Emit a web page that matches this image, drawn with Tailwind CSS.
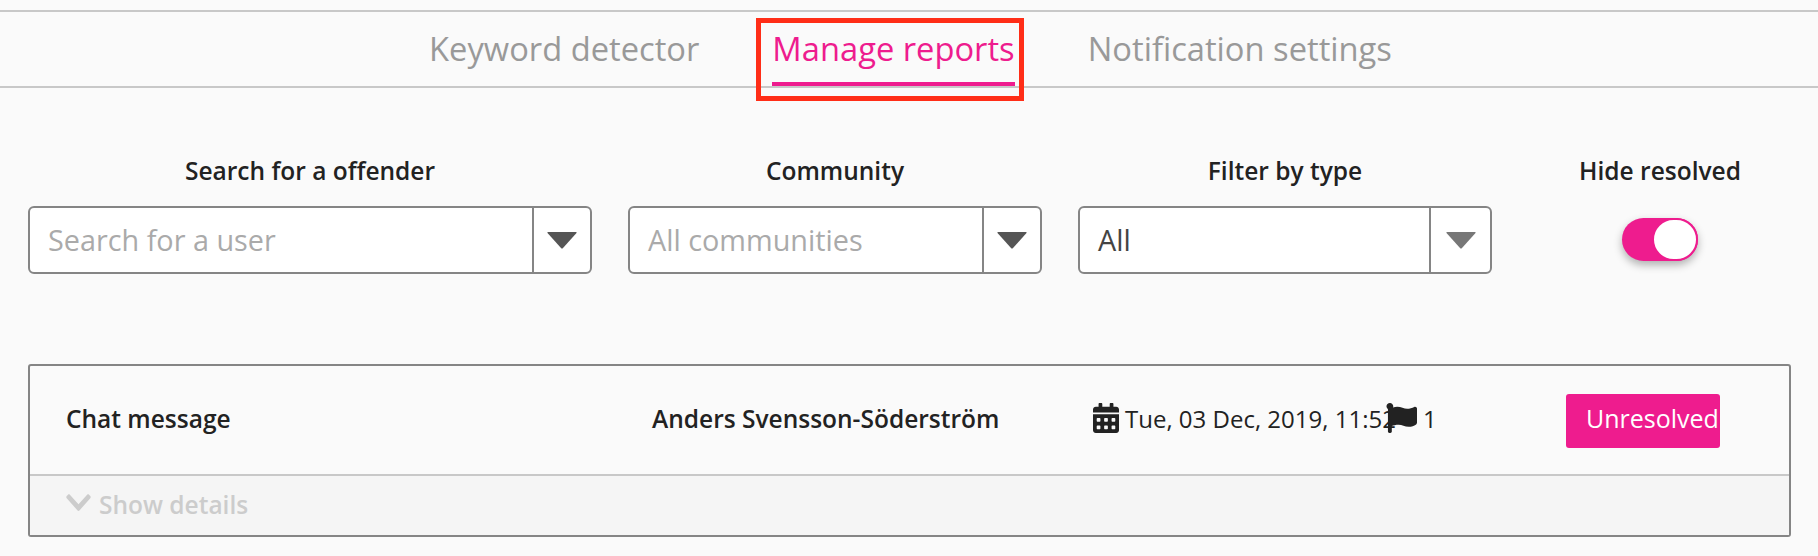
<!DOCTYPE html>
<html lang="en">
<head>
    <meta charset="UTF-8">
    <meta name="viewport" content="width=device-width, initial-scale=1.0">
    <title>Manage reports</title>
    <script src="https://cdn.jsdelivr.net/npm/@tailwindcss/browser@4"></script>
</head>
<body class="bg-[#fafafa] h-[556px] overflow-hidden font-['Open_Sans',sans-serif] text-[#222]">
    <!-- Tabs -->
    <nav class="mt-[10px] h-[78px] border-y-2 border-[#c8c8c8] flex justify-center text-[32.7px] text-[#999] pl-[3px]">
        <a class="h-[74px] leading-[74px]">Keyword detector</a>
        <a class="relative ml-[73px] h-[74px] leading-[74px] text-[#ee1c8e] border-b-4 border-[#ee1c8e]">
            Manage reports
            <span class="absolute left-[-16px] right-[-9px] top-[6px] h-[83px] border-[5px] border-[#ff2d17]"></span>
        </a>
        <a class="ml-[73px] h-[74px] leading-[74px]">Notification settings</a>
    </nav>

    <!-- Filters -->
    <section class="mt-[58px] ml-[28px] flex text-[24.5px]">
        <div class="w-[564px]">
            <p class="h-[60px] leading-[50px] font-semibold text-center">Search for a offender</p>
            <div class="h-[68px] bg-white border-2 border-[#858585] rounded-[6px] flex">
                <span class="flex-1 pl-[18px] text-[28.8px] leading-[64px] text-[#aaa]">Search for a user</span>
                <span class="w-[58px] border-l-2 border-[#858585] flex items-center justify-center">
                    <svg class="w-[30px] h-[17px]" viewBox="0 0 30 17"><path fill="#555" d="M1 0h28q1 0 .5 1L16 16q-1 1-2 0L.5 1Q0 0 1 0z"/></svg>
                </span>
            </div>
        </div>
        <div class="ml-[36px] w-[414px]">
            <p class="h-[60px] leading-[50px] font-semibold text-center">Community</p>
            <div class="h-[68px] bg-white border-2 border-[#858585] rounded-[6px] flex">
                <span class="flex-1 pl-[18px] text-[28.8px] leading-[64px] text-[#aaa]">All communities</span>
                <span class="w-[58px] border-l-2 border-[#858585] flex items-center justify-center">
                    <svg class="w-[30px] h-[17px]" viewBox="0 0 30 17"><path fill="#555" d="M1 0h28q1 0 .5 1L16 16q-1 1-2 0L.5 1Q0 0 1 0z"/></svg>
                </span>
            </div>
        </div>
        <div class="ml-[36px] w-[414px]">
            <p class="h-[60px] leading-[50px] font-semibold text-center">Filter by type</p>
            <div class="h-[68px] bg-white border-2 border-[#858585] rounded-[6px] flex">
                <span class="flex-1 pl-[18px] text-[28.8px] leading-[64px] text-[#444]">All</span>
                <span class="w-[61px] border-l-2 border-[#858585] flex items-center justify-center">
                    <svg class="w-[30px] h-[17px]" viewBox="0 0 30 17"><path fill="#777" d="M1 0h28q1 0 .5 1L16 16q-1 1-2 0L.5 1Q0 0 1 0z"/></svg>
                </span>
            </div>
        </div>
        <div class="ml-[77px] w-[182px] flex flex-col items-center">
            <p class="h-[72px] leading-[50px] font-semibold">Hide resolved</p>
            <div class="w-[76px] h-[43px] rounded-full bg-[#ee1c8e] flex justify-end shadow-[0_4px_8px_rgba(0,0,0,0.3)]">
                <span class="w-[46px] h-[43px] rounded-full bg-white border-2 border-[#ee1c8e]"></span>
            </div>
        </div>
    </section>

    <!-- Report card -->
    <article class="mt-[90px] ml-[28px] w-[1763px] h-[173px] border-2 border-[#858585] rounded-[3px]">
        <div class="h-[108px] pl-[36px] flex items-center text-[24.5px]">
            <span class="w-[586px] font-semibold mb-[2px]">Chat message</span>
            <span class="w-[441px] font-semibold mb-[2px]">Anders Svensson-Söderström</span>
            <span class="w-[293px] flex items-center whitespace-nowrap mb-[5px] text-[24px]">
                <svg class="w-[26px] h-[30px] mr-[6px] shrink-0" viewBox="0 0 448 512" preserveAspectRatio="none"><path fill="#222" d="M0 464c0 26.5 21.5 48 48 48h352c26.5 0 48-21.5 48-48V192H0v272zm320-196c0-6.6 5.4-12 12-12h40c6.6 0 12 5.4 12 12v40c0 6.6-5.4 12-12 12h-40c-6.6 0-12-5.4-12-12v-40zm0 128c0-6.6 5.4-12 12-12h40c6.6 0 12 5.4 12 12v40c0 6.6-5.4 12-12 12h-40c-6.6 0-12-5.4-12-12v-40zM192 268c0-6.6 5.4-12 12-12h40c6.6 0 12 5.4 12 12v40c0 6.6-5.4 12-12 12h-40c-6.6 0-12-5.4-12-12v-40zm0 128c0-6.6 5.4-12 12-12h40c6.6 0 12 5.4 12 12v40c0 6.6-5.4 12-12 12h-40c-6.6 0-12-5.4-12-12v-40zM64 268c0-6.6 5.4-12 12-12h40c6.6 0 12 5.4 12 12v40c0 6.6-5.4 12-12 12H76c-6.6 0-12-5.4-12-12v-40zm0 128c0-6.6 5.4-12 12-12h40c6.6 0 12 5.4 12 12v40c0 6.6-5.4 12-12 12H76c-6.6 0-12-5.4-12-12v-40zM400 64h-48V16c0-8.8-7.2-16-16-16h-32c-8.8 0-16 7.2-16 16v48H160V16c0-8.8-7.2-16-16-16h-32c-8.8 0-16 7.2-16 16v48H48C21.5 64 0 85.5 0 112v48h448v-48c0-26.5-21.5-48-48-48z"/></svg>
                <span class="mt-[2px]">Tue, 03 Dec, 2019, 11:52</span>
            </span>
            <span class="flex items-center mb-[5px] text-[24px]">
                <svg class="w-[31px] h-[30px] mr-[6px]" viewBox="0 0 512 512" preserveAspectRatio="none"><path fill="#222" d="M349.565 98.783C295.978 98.783 251.721 64 184.348 64c-24.955 0-47.309 4.384-68.045 12.013a55.947 55.947 0 0 0 3.586-23.562C118.117 24.015 94.806 1.206 66.338.048 34.345-1.254 8 24.296 8 56c0 19.026 9.497 35.825 24 45.945V488c0 13.255 10.745 24 24 24h16c13.255 0 24-10.745 24-24v-94.4c28.311-12.064 63.582-22.122 114.435-22.122 53.588 0 97.844 34.783 165.217 34.783 48.169 0 86.667-16.294 122.505-40.858C506.84 359.452 512 349.571 512 339.045v-243.1c0-23.393-24.269-38.87-45.485-29.016-34.338 15.948-76.454 31.854-116.95 31.854z"/></svg>
                <span class="mt-[2px]">1</span>
            </span>
            <span class="ml-auto mr-[69px] mt-[2px] w-[154px] h-[54px] pl-[20px] text-[25px] leading-[48px] bg-[#ee1c8e] text-white rounded-[3px] overflow-hidden whitespace-nowrap">Unresolved</span>
        </div>
        <div class="h-[61px] border-t-2 border-[#c8c8c8] bg-[#f5f5f5] pl-[36px] flex items-center text-[24.5px] font-semibold text-[#ccc]">
            <svg class="w-[25px] h-[17px] mr-[8px] mt-[-6px]" viewBox="0 120 448 270" preserveAspectRatio="none"><path fill="#ccc" d="M207.029 381.476L12.686 187.132c-9.373-9.373-9.373-24.569 0-33.941l22.667-22.667c9.357-9.357 24.522-9.375 33.901-.04L224 284.505l154.745-154.021c9.379-9.335 24.544-9.317 33.901.04l22.667 22.667c9.373 9.373 9.373 24.569 0 33.941L240.971 381.476c-9.373 9.372-24.569 9.372-33.942 0z"/></svg>
            Show details
        </div>
    </article>
</body>
</html>
